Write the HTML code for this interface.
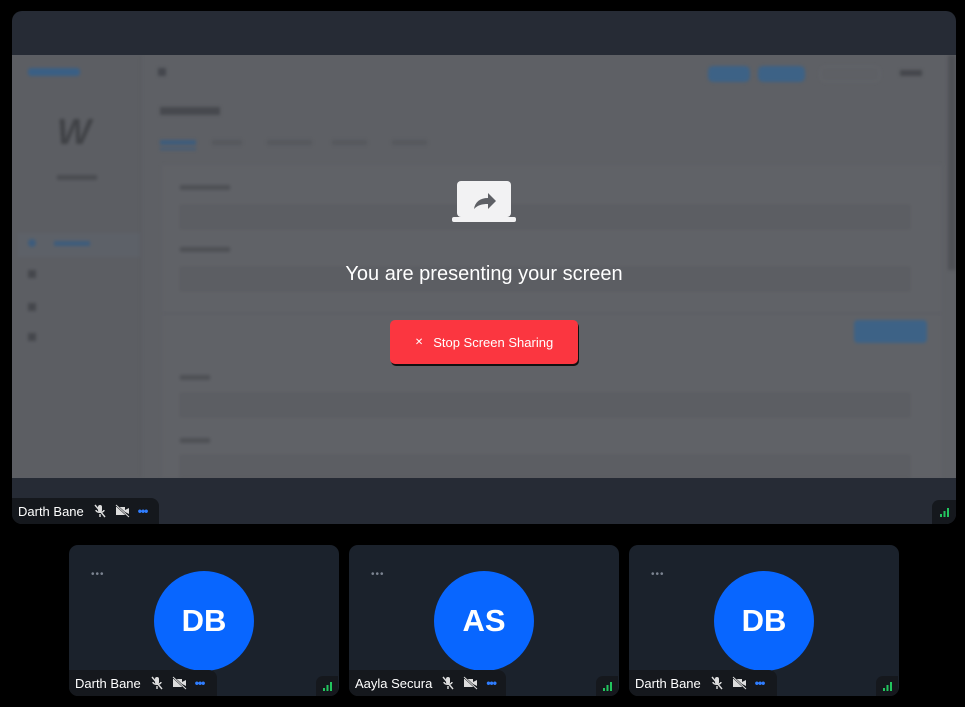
<!DOCTYPE html>
<html><head><meta charset="utf-8"><style>
*{margin:0;padding:0;box-sizing:border-box}
body{width:965px;height:707px;background:#000;position:relative;overflow:hidden;font-family:"Segoe UI","Liberation Sans",sans-serif}
.a{position:absolute}
.main{left:12px;top:11px;width:944px;height:513px;border-radius:10px;overflow:hidden;background:#262b35}
.scr{left:0;top:44px;width:944px;height:423px;background:#5e6065;overflow:hidden}
.bl{filter:blur(1.5px)}
.nb{background:#15181d;color:#fff;font-size:13px;display:flex;align-items:center;height:26px}
.tile{top:545px;width:270px;height:151px;background:#1b222c;border-radius:9px;overflow:hidden}
.av{left:85px;top:26px;width:100px;height:100px;border-radius:50%;background:#0866ff;color:#fff;font-size:31px;font-weight:600;display:flex;align-items:center;justify-content:center}
.dots{left:22px;top:25px;color:#7b8390;font-size:10px;letter-spacing:1px;line-height:10px}
.sig{width:22px;height:20px;background:#15181d;border-radius:7px 0 0 0}
.in{background:#5c5e63;border:1px solid #58595e}
</style></head><body>
<div class="a main">
 <div class="a scr">
  <div class="bl a" style="left:0;top:0;width:944px;height:423px">
   <div class="a" style="left:0;top:0;width:128px;height:423px;background:#5c5e63"></div>
   <div class="a" style="left:128px;top:0;width:1px;height:423px;background:#57595e"></div>
   <div class="a" style="left:16px;top:13px;width:52px;height:8px;background:#3a5f85;border-radius:3px"></div>
   <div class="a" style="left:146px;top:13px;width:8px;height:8px;background:#44474d"></div>
   <div class="a" style="left:45px;top:55px;width:44px;height:44px;color:#404246;font-size:36px;font-style:italic;font-weight:bold;line-height:44px">W</div>
   <div class="a" style="left:45px;top:120px;width:40px;height:5px;background:#4a4c51"></div>
   <div class="a" style="left:6px;top:178px;width:122px;height:24px;background:#5d6168"></div>
   <div class="a" style="left:16px;top:184px;width:8px;height:8px;background:#3d5c7c;border-radius:50%"></div>
   <div class="a" style="left:42px;top:186px;width:36px;height:5px;background:#3d5c7c"></div>
   <div class="a" style="left:16px;top:215px;width:8px;height:8px;background:#45474c"></div>
   <div class="a" style="left:16px;top:248px;width:8px;height:8px;background:#45474c"></div>
   <div class="a" style="left:16px;top:278px;width:8px;height:8px;background:#45474c"></div>
   <div class="a" style="left:148px;top:52px;width:60px;height:8px;background:#47494e"></div>
   <div class="a" style="left:148px;top:85px;width:36px;height:5px;background:#3d5c7c"></div>
   <div class="a" style="left:148px;top:93px;width:36px;height:2px;background:#3d5c7c"></div>
   <div class="a" style="left:200px;top:85px;width:30px;height:5px;background:#56585d"></div>
   <div class="a" style="left:255px;top:85px;width:45px;height:5px;background:#56585d"></div>
   <div class="a" style="left:320px;top:85px;width:35px;height:5px;background:#56585d"></div>
   <div class="a" style="left:380px;top:85px;width:35px;height:5px;background:#56585d"></div>
   <div class="a" style="left:150px;top:110px;width:780px;height:313px;background:#606267"></div>
   <div class="a" style="left:168px;top:130px;width:50px;height:5px;background:#4e5055"></div>
   <div class="a in" style="left:168px;top:150px;width:730px;height:24px"></div>
   <div class="a" style="left:168px;top:192px;width:50px;height:5px;background:#4e5055"></div>
   <div class="a in" style="left:168px;top:212px;width:730px;height:24px"></div>
   <div class="a" style="left:168px;top:320px;width:30px;height:5px;background:#4e5055"></div>
   <div class="a in" style="left:168px;top:338px;width:730px;height:24px"></div>
   <div class="a" style="left:168px;top:383px;width:30px;height:5px;background:#4e5055"></div>
   <div class="a in" style="left:168px;top:400px;width:730px;height:24px"></div>
   <div class="a" style="left:150px;top:258px;width:780px;height:1px;background:#595b60"></div>
   <div class="a" style="left:842px;top:265px;width:73px;height:23px;background:#3d6286;border-radius:4px"></div>
   <div class="a" style="left:696px;top:11px;width:42px;height:16px;background:#3d6286;border-radius:5px"></div>
   <div class="a" style="left:746px;top:11px;width:47px;height:16px;background:#3d6286;border-radius:5px"></div>
   <div class="a" style="left:808px;top:11px;width:60px;height:16px;border:1px solid #66686d;border-radius:5px"></div>
   <div class="a" style="left:888px;top:15px;width:22px;height:6px;background:#45474c"></div>
   <div class="a" style="left:936px;top:0;width:8px;height:215px;background:#4f5156"></div>
  </div>
 </div>
 <div class="a nb" style="left:0;top:487px;width:147px;border-radius:0 8px 0 0;padding-left:6px">Darth Bane
  <svg width="14" height="14" viewBox="0 0 14 14" style="margin-left:9px"><rect x="5" y="1" width="4" height="7" rx="2" fill="#ddd"/><path d="M3 6c0 3 8 3 8 0M7 10v3M2 1l10 12" stroke="#ddd" stroke-width="1.4" fill="none"/></svg>
  <svg width="16" height="14" viewBox="0 0 16 14" style="margin-left:8px"><path d="M1 3h9v8H1z M10 6l4-2v6l-4-2" fill="#ddd"/><path d="M1 1l13 12" stroke="#15181d" stroke-width="2"/><path d="M1 1l13 12" stroke="#ddd" stroke-width="1"/></svg>
  <span style="color:#2f7dff;font-size:12px;margin-left:7px;font-weight:bold;letter-spacing:-1px">•••</span></div>
 <div class="a sig" style="left:920px;top:489px;width:24px;height:24px">
  <svg class="a" style="left:8px;top:8px" width="10" height="9"><rect x="0" y="6" width="2" height="3" fill="#22c55e"/><rect x="3.5" y="3" width="2" height="6" fill="#22c55e"/><rect x="7" y="0" width="2" height="9" fill="#22c55e"/></svg></div>
</div>
<svg class="a" style="left:452px;top:181px" width="64" height="42" viewBox="0 0 64 42"><rect x="5" y="0" width="54" height="36" rx="4" fill="#f2f2f3"/><rect x="0" y="36" width="64" height="5" rx="2" fill="#f2f2f3"/><path d="M22 28c1-7 6-11 14-11v-5l8 8-8 8v-5c-6 0-10 1-14 5z" fill="#5e6065"/></svg>
<div class="a" style="left:330px;top:263px;width:308px;text-align:center;color:#fff;font-size:20px">You are presenting your screen</div>
<div class="a" style="left:390px;top:320px;width:188px;height:44px;background:#fb3640;border-radius:5px;box-shadow:1px 2px 0 #111;color:#fff;font-size:13px;display:flex;align-items:center;justify-content:center"><span style="font-size:10px;margin-right:10px">✕</span>Stop Screen Sharing</div>

<div class="a tile" style="left:69px"><div class="a dots">•••</div><div class="a av">DB</div>
 <div class="a nb" style="left:0;top:125px;width:148px;border-radius:0 8px 0 0;padding-left:6px">Darth Bane
 <svg width="14" height="14" viewBox="0 0 14 14" style="margin-left:9px"><rect x="5" y="1" width="4" height="7" rx="2" fill="#ddd"/><path d="M3 6c0 3 8 3 8 0M7 10v3M2 1l10 12" stroke="#ddd" stroke-width="1.4" fill="none"/></svg>
 <svg width="16" height="14" viewBox="0 0 16 14" style="margin-left:8px"><path d="M1 3h9v8H1z M10 6l4-2v6l-4-2" fill="#ddd"/><path d="M1 1l13 12" stroke="#15181d" stroke-width="2"/><path d="M1 1l13 12" stroke="#ddd" stroke-width="1"/></svg>
 <span style="color:#2f7dff;font-size:12px;margin-left:7px;font-weight:bold;letter-spacing:-1px">•••</span></div>
 <div class="a sig" style="left:247px;top:131px"><svg class="a" style="left:7px;top:6px" width="10" height="9"><rect x="0" y="6" width="2" height="3" fill="#22c55e"/><rect x="3.5" y="3" width="2" height="6" fill="#22c55e"/><rect x="7" y="0" width="2" height="9" fill="#22c55e"/></svg></div></div>

<div class="a tile" style="left:349px"><div class="a dots">•••</div><div class="a av">AS</div>
 <div class="a nb" style="left:0;top:125px;width:157px;border-radius:0 8px 0 0;padding-left:6px">Aayla Secura
 <svg width="14" height="14" viewBox="0 0 14 14" style="margin-left:9px"><rect x="5" y="1" width="4" height="7" rx="2" fill="#ddd"/><path d="M3 6c0 3 8 3 8 0M7 10v3M2 1l10 12" stroke="#ddd" stroke-width="1.4" fill="none"/></svg>
 <svg width="16" height="14" viewBox="0 0 16 14" style="margin-left:8px"><path d="M1 3h9v8H1z M10 6l4-2v6l-4-2" fill="#ddd"/><path d="M1 1l13 12" stroke="#15181d" stroke-width="2"/><path d="M1 1l13 12" stroke="#ddd" stroke-width="1"/></svg>
 <span style="color:#2f7dff;font-size:12px;margin-left:7px;font-weight:bold;letter-spacing:-1px">•••</span></div>
 <div class="a sig" style="left:247px;top:131px"><svg class="a" style="left:7px;top:6px" width="10" height="9"><rect x="0" y="6" width="2" height="3" fill="#22c55e"/><rect x="3.5" y="3" width="2" height="6" fill="#22c55e"/><rect x="7" y="0" width="2" height="9" fill="#22c55e"/></svg></div></div>

<div class="a tile" style="left:629px"><div class="a dots">•••</div><div class="a av">DB</div>
 <div class="a nb" style="left:0;top:125px;width:148px;border-radius:0 8px 0 0;padding-left:6px">Darth Bane
 <svg width="14" height="14" viewBox="0 0 14 14" style="margin-left:9px"><rect x="5" y="1" width="4" height="7" rx="2" fill="#ddd"/><path d="M3 6c0 3 8 3 8 0M7 10v3M2 1l10 12" stroke="#ddd" stroke-width="1.4" fill="none"/></svg>
 <svg width="16" height="14" viewBox="0 0 16 14" style="margin-left:8px"><path d="M1 3h9v8H1z M10 6l4-2v6l-4-2" fill="#ddd"/><path d="M1 1l13 12" stroke="#15181d" stroke-width="2"/><path d="M1 1l13 12" stroke="#ddd" stroke-width="1"/></svg>
 <span style="color:#2f7dff;font-size:12px;margin-left:7px;font-weight:bold;letter-spacing:-1px">•••</span></div>
 <div class="a sig" style="left:247px;top:131px"><svg class="a" style="left:7px;top:6px" width="10" height="9"><rect x="0" y="6" width="2" height="3" fill="#22c55e"/><rect x="3.5" y="3" width="2" height="6" fill="#22c55e"/><rect x="7" y="0" width="2" height="9" fill="#22c55e"/></svg></div></div>
</body></html>
